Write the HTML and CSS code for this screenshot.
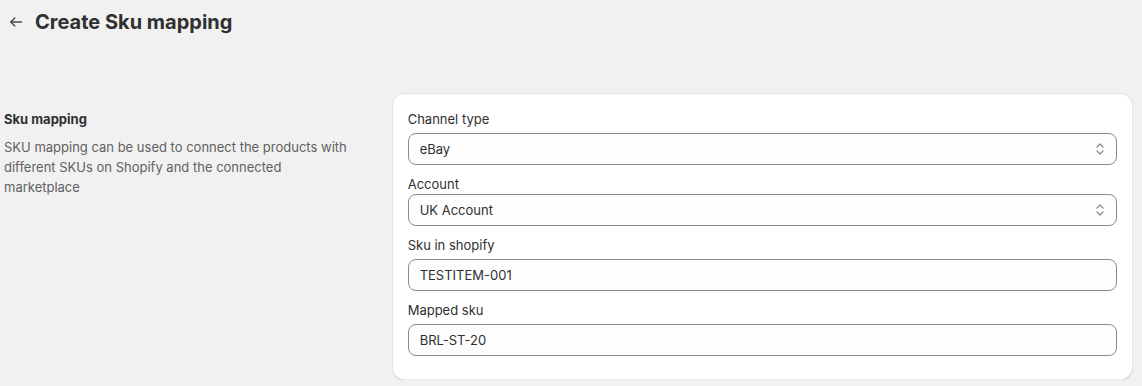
FILE: index.html
```html
<!DOCTYPE html>
<html lang="en">
<head>
    <meta charset="UTF-8">
    <meta name="viewport" content="width=device-width, initial-scale=1.0">
    <title>Create Sku mapping</title>
    <link rel="stylesheet" href="styles.css">
</head>
<body>
    <div class="page">
        <div class="page-header">
            <button class="back-btn" aria-label="Back">
                <svg width="14" height="14" viewBox="0 0 14 14" fill="none" stroke="currentColor" stroke-width="1.4" stroke-linecap="round" stroke-linejoin="round">
                    <path d="M12.5 7H1.8"/>
                    <path d="M5.8 3L1.8 7l4 4"/>
                </svg>
            </button>
            <h1>Create Sku mapping</h1>
        </div>

        <div class="layout">
            <div class="annotation">
                <h2>Sku mapping</h2>
                <p>SKU mapping can be used to connect the products with different SKUs on Shopify and the connected marketplace</p>
            </div>

            <div class="card">
                <div class="field">
                    <label for="channelType">Channel type</label>
                    <div class="select">
                        <span>eBay</span>
                        <svg width="12" height="14" viewBox="0 0 12 14" fill="none" stroke="currentColor" stroke-width="1.2" stroke-linecap="round" stroke-linejoin="round">
                            <path d="M3 5l3-3 3 3"/>
                            <path d="M3 9l3 3 3-3"/>
                        </svg>
                    </div>
                </div>
                <div class="field field-tight">
                    <label for="account">Account</label>
                    <div class="select">
                        <span>UK Account</span>
                        <svg width="12" height="14" viewBox="0 0 12 14" fill="none" stroke="currentColor" stroke-width="1.2" stroke-linecap="round" stroke-linejoin="round">
                            <path d="M3 5l3-3 3 3"/>
                            <path d="M3 9l3 3 3-3"/>
                        </svg>
                    </div>
                </div>
                <div class="field">
                    <label for="skuShopify">Sku in shopify</label>
                    <input id="skuShopify" class="text-input" type="text" value="TESTITEM-001">
                </div>
                <div class="field">
                    <label for="mappedSku">Mapped sku</label>
                    <input id="mappedSku" class="text-input" type="text" value="BRL-ST-20">
                </div>
            </div>
        </div>
    </div>
</body>
</html>
```

FILE: styles.css
```css
body {
    margin: 0;
    background-color: #f1f1f1;
    color: #303030;
    font-family: Inter, "Noto Sans", sans-serif;
    font-size: 13px;
    line-height: 20px;
}

.page {
    padding: 10px 10px 0 4px;
}

.page-header {
    display: flex;
    align-items: center;
    gap: 11px;
    height: 24px;
    padding-left: 4px;
}

.back-btn {
    display: flex;
    align-items: center;
    justify-content: center;
    width: 16px;
    height: 20px;
    padding: 0;
    border: none;
    background: none;
    color: #4a4a4a;
    cursor: pointer;
}

.page-header h1 {
    margin: 0;
    font-size: 20px;
    line-height: 24px;
    font-weight: 700;
    color: #303030;
}

.layout {
    display: grid;
    grid-template-columns: 1fr 2fr;
    gap: 19px;
    margin-top: 60px;
}

.annotation {
    padding-top: 15px;
}

.annotation h2 {
    margin: 0 0 8px;
    font-size: 13px;
    font-weight: 650;
    color: #303030;
}

.annotation p {
    margin: 0;
    color: #616161;
    padding-right: 14px;
}

.card {
    background: #fff;
    border-radius: 12px;
    padding: 15px 15px 24px;
    display: flex;
    flex-direction: column;
    gap: 9px;
    box-shadow: 0 1px 0 rgba(26, 26, 26, 0.07), 0 0 0 1px rgba(0, 0, 0, 0.05), inset 0 -1px 0 rgba(0, 0, 0, 0.08);
}

.field label {
    display: block;
    margin-bottom: 4px;
    color: #303030;
}

.field-tight label {
    margin-bottom: 0;
}

.select,
.text-input {
    box-sizing: border-box;
    width: 100%;
    height: 32px;
    border: 1px solid #8a8a8a;
    border-radius: 8px;
    background: #fdfdfd;
    color: #303030;
    font-family: inherit;
    font-size: 13px;
    padding: 0 11px;
}

.select {
    display: flex;
    align-items: center;
    justify-content: space-between;
}

.select svg {
    color: #8a8a8a;
    margin-right: -1px;
}

.text-input {
    display: block;
    outline: none;
}
```
